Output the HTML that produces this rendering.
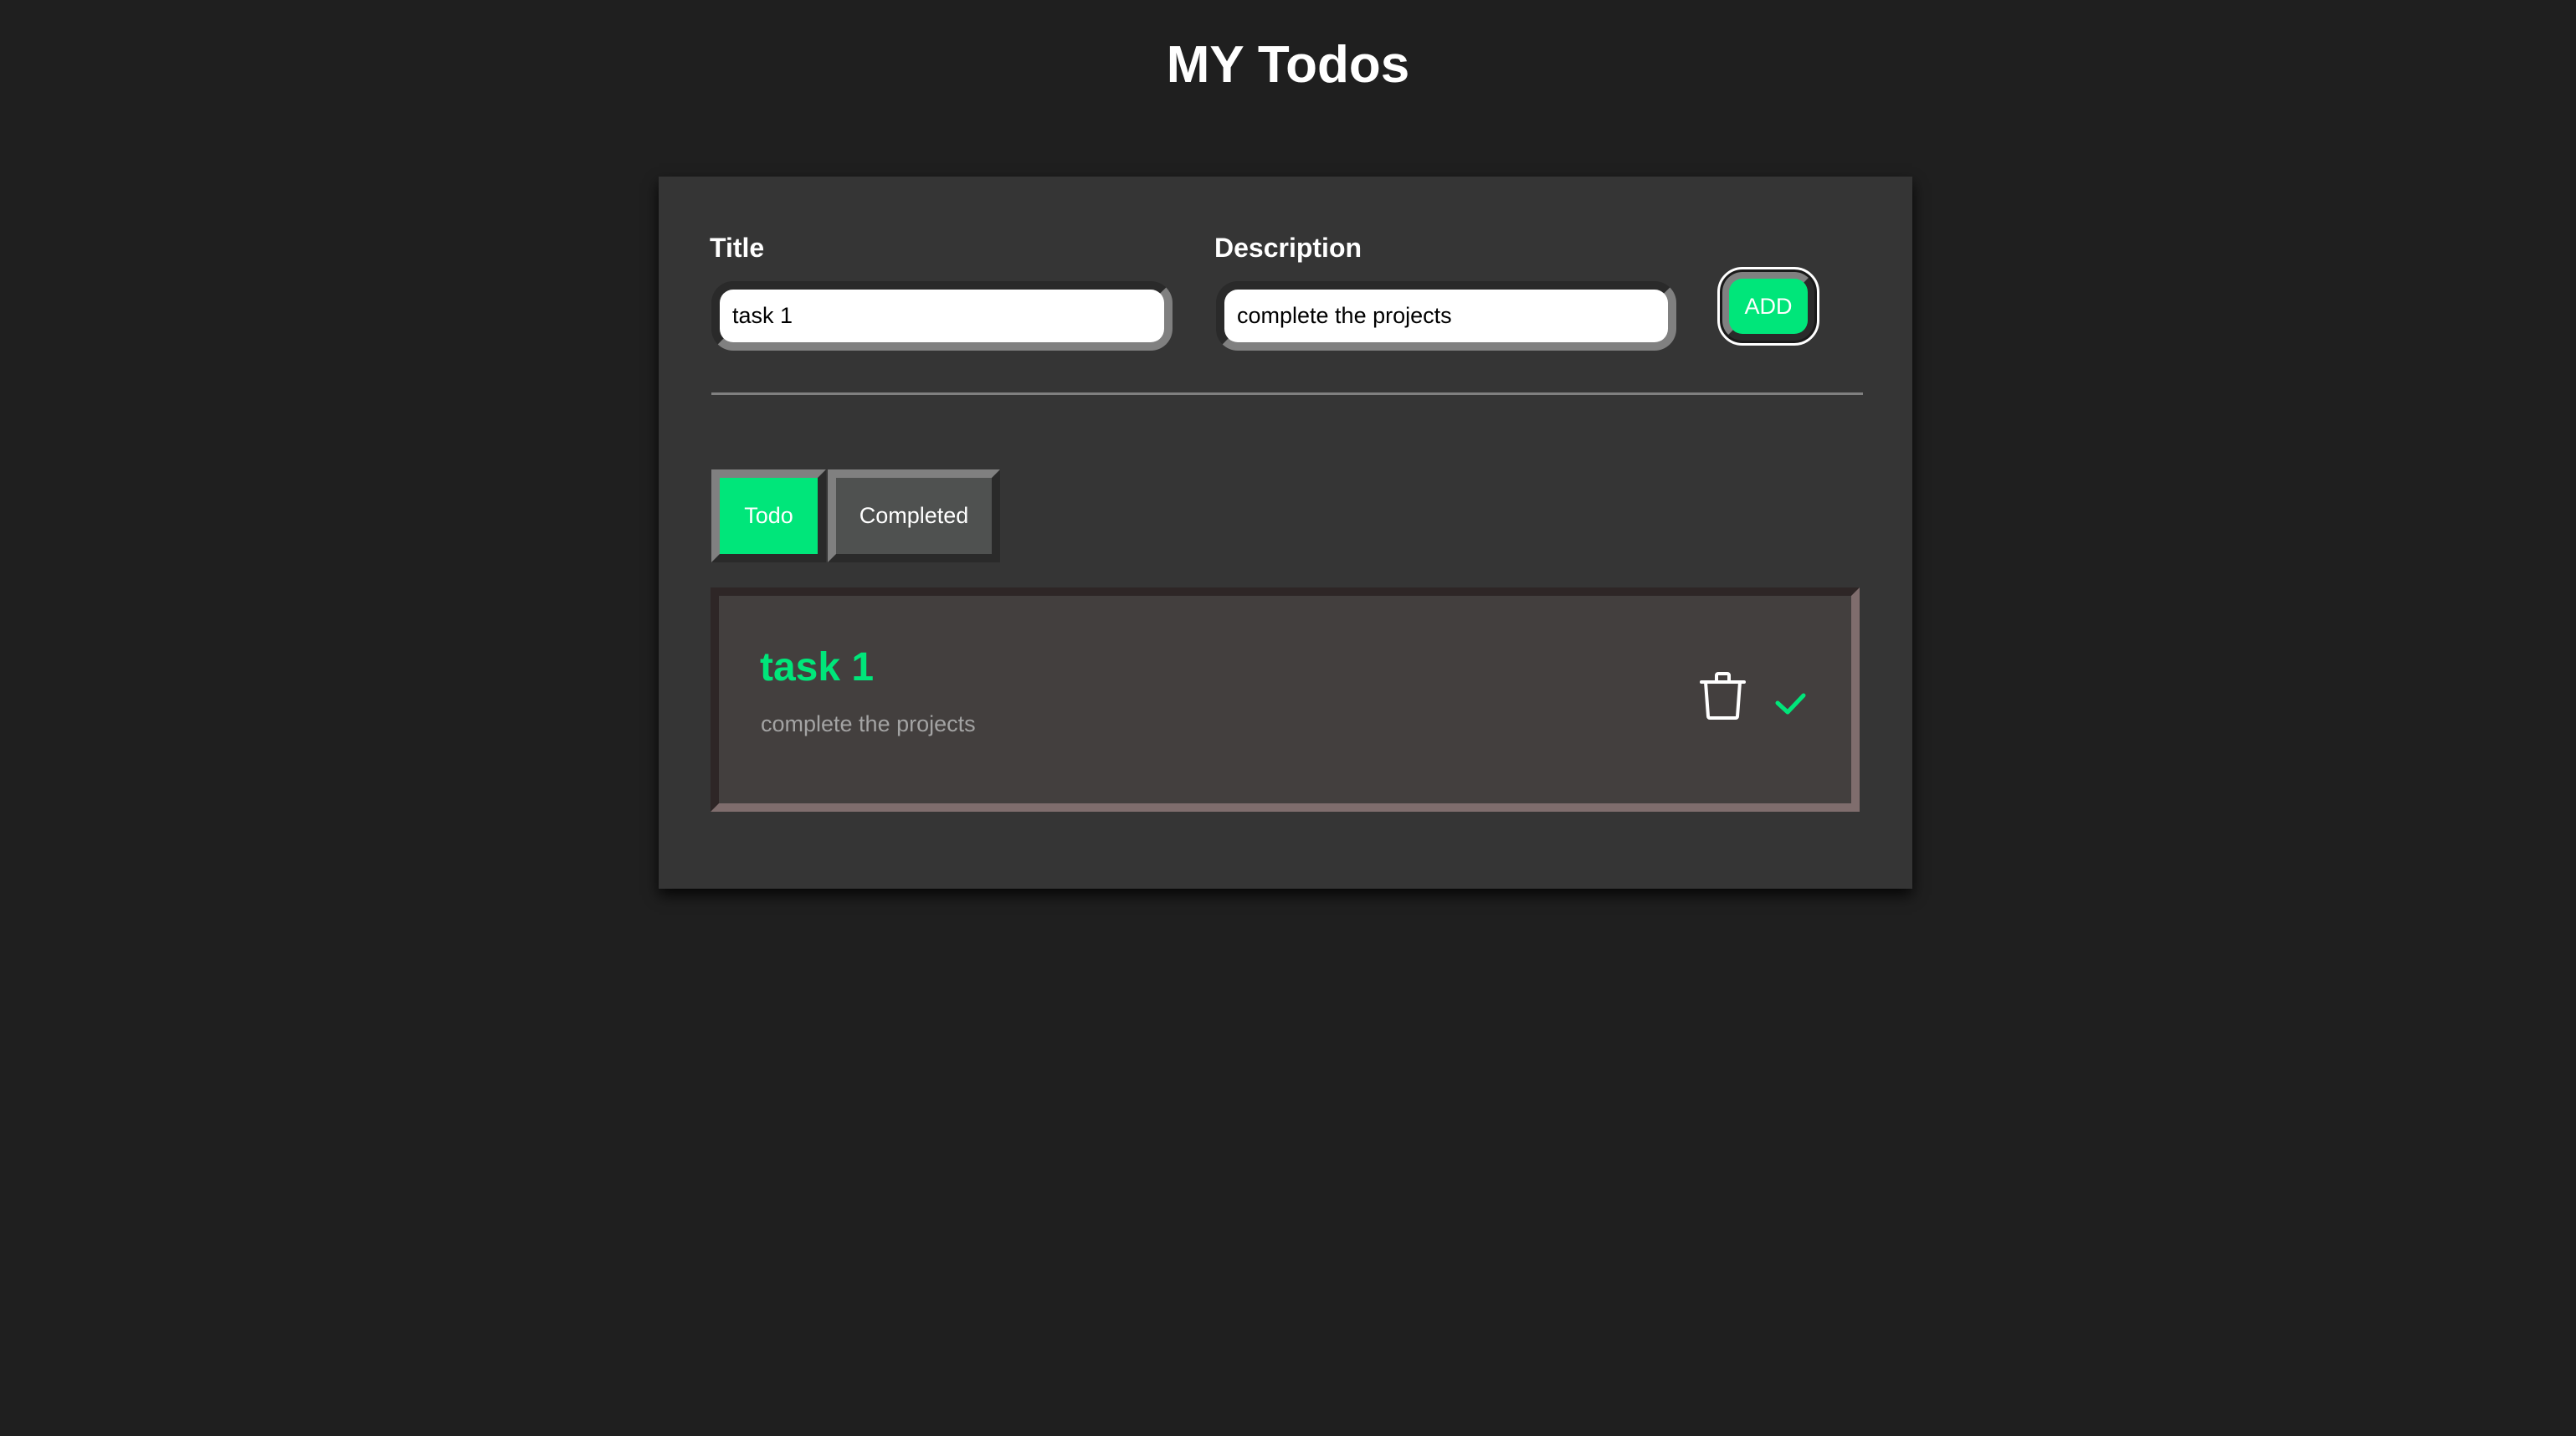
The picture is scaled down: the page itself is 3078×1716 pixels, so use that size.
<!DOCTYPE html>
<html><head><style>
body{margin:0;width:3078px;height:1716px;background:#1f1f1f;font-family:"Liberation Sans",sans-serif;position:relative;overflow:hidden}
.a{position:absolute;box-sizing:border-box}
h1{position:absolute;margin:0;left:0;width:3078px;top:38px;text-align:center;color:#fff;font-size:62px;font-weight:bold;line-height:80px}
.panel{left:787px;top:211px;width:1498px;height:851px;background:#353535;box-shadow:0 8px 16px rgba(0,0,0,.8)}
.lbl{color:#fff;font-weight:bold;font-size:32px}
.inp{height:83px;border:10px solid;border-color:#2a2a2a #808080 #808080 #2a2a2a;border-radius:26px;background:#fff;font-size:27px;color:#000;padding-left:15px;line-height:63px}
</style></head><body>
<h1>MY Todos</h1>
<div class="a panel"></div>
<div class="a lbl" style="left:848px;top:278px">Title</div>
<div class="a lbl" style="left:1451px;top:278px">Description</div>
<div class="a inp" style="left:850px;top:336px;width:551px">task 1</div>
<div class="a inp" style="left:1453px;top:336px;width:550px">complete the projects</div>
<div class="a" style="left:2052px;top:319px;width:122px;height:94px;border:3px solid #fff;border-radius:30px;background:#1a1a1a"></div>
<div class="a" style="left:2058px;top:325px;width:110px;height:82px;border:8px solid;border-color:#808080 #2a2a2a #2a2a2a #808080;border-radius:24px;background:#00e67a;color:#fff;font-size:27px;text-align:center;line-height:66px">ADD</div>
<div class="a" style="left:850px;top:469px;width:1376px;height:3px;background:#808080"></div>
<div class="a" style="left:850px;top:561px;width:137px;height:111px;border:10px solid;border-color:#808080 #2a2a2a #2a2a2a #808080;background:#00e67a;color:#fff;font-size:27px;text-align:center;line-height:91px">Todo</div>
<div class="a" style="left:989px;top:561px;width:206px;height:111px;border:10px solid;border-color:#808080 #2a2a2a #2a2a2a #808080;background:#4f5150;color:#fff;font-size:27px;text-align:center;line-height:91px">Completed</div>
<div class="a" style="left:849px;top:702px;width:1373px;height:268px;border:10px solid;border-color:#2e2626 #7f6d6d #7f6d6d #2e2626;background:#433f3e"></div>
<div class="a" style="left:908px;top:768px;color:#00e67a;font-weight:bold;font-size:48px;line-height:60px">task 1</div>
<div class="a" style="left:909px;top:847px;color:#a3a3a3;font-size:27px;line-height:36px">complete the projects</div>
<svg class="a" style="left:2025px;top:798px" width="66" height="66" viewBox="0 0 66 66" fill="none" stroke="#fff" stroke-width="4" stroke-linecap="round" stroke-linejoin="round">
<path d="M8 17H59"/><path d="M26 17V9a2 2 0 0 1 2-2h11a2 2 0 0 1 2 2v8"/><path d="M13 17l3 41a2 2 0 0 0 2 2h31a2 2 0 0 0 2-2l3-41"/></svg>
<svg class="a" style="left:2115px;top:822px" width="50" height="40" viewBox="0 0 50 40" fill="none" stroke="#00e67a" stroke-width="5" stroke-linecap="round" stroke-linejoin="round"><path d="M9 18l12 11 19-20"/></svg>
</body></html>
